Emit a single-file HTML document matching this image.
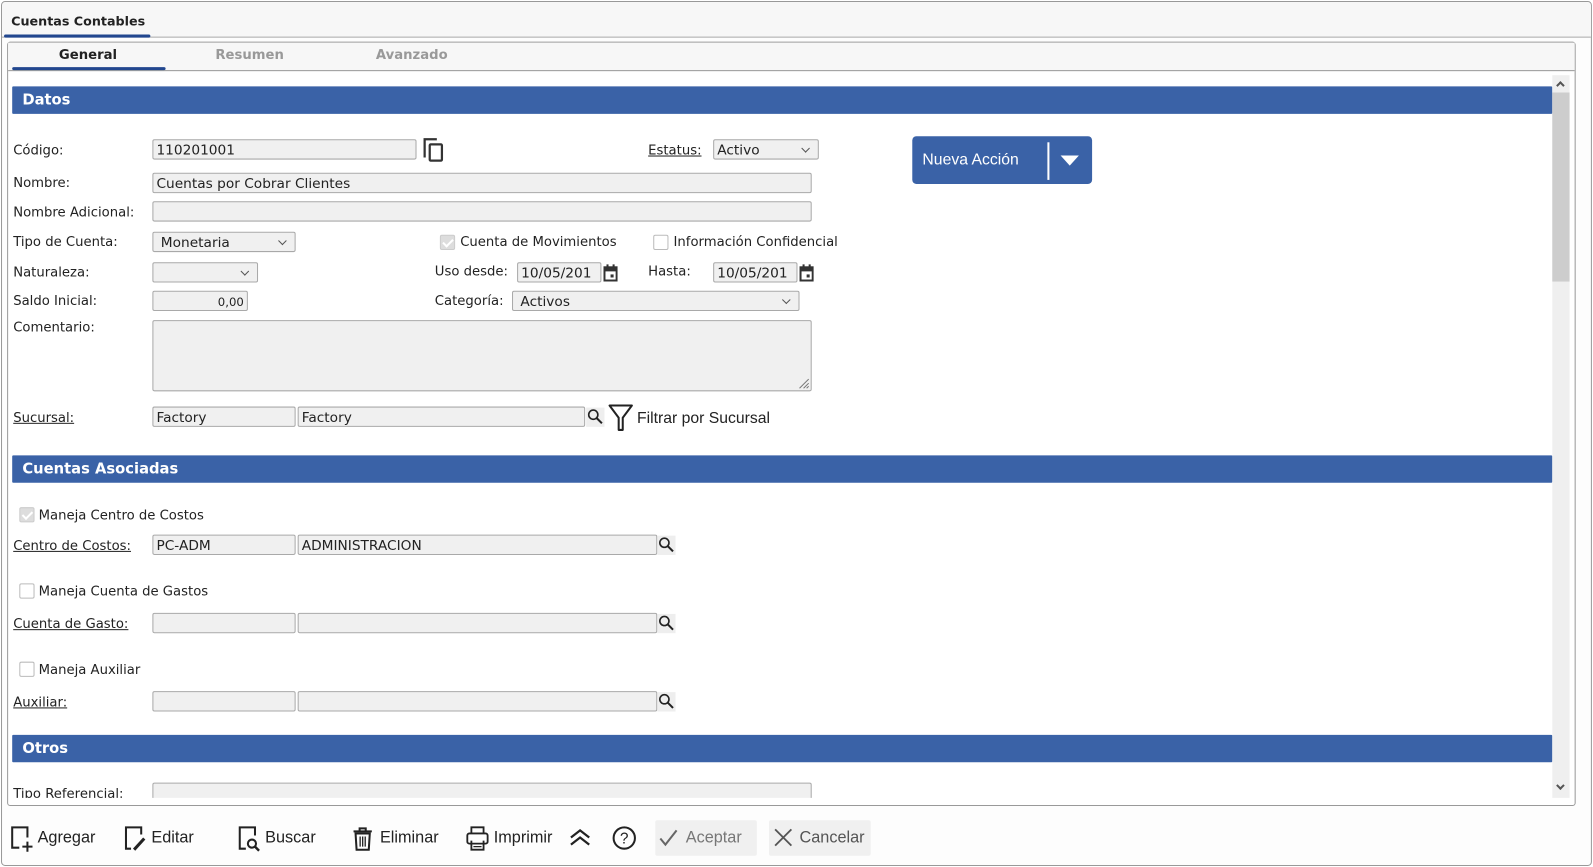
<!DOCTYPE html>
<html><head><meta charset="utf-8"><style>
*{box-sizing:border-box;margin:0;padding:0}
html,body{width:1593px;height:867px;overflow:hidden;background:#fff}
#w{position:absolute;left:0;top:0;width:1568px;height:853px;transform:scale(1.0159,1.0164);transform-origin:0 0;font-family:"DejaVu Sans",Verdana,sans-serif;font-size:13px;color:#222}
.a{position:absolute}
.lb{position:absolute;white-space:nowrap;line-height:18px}
.u{text-decoration:underline}
.in{position:absolute;background:#f0f0f0;border:1px solid #a9a9a9;border-radius:2px;height:20px;padding:1px 3px 0;line-height:18px;font-size:13.5px;white-space:nowrap;overflow:hidden}
.sel::after{content:"";position:absolute;right:9px;top:5px;width:5px;height:5px;border-right:1px solid #555;border-bottom:1px solid #555;transform:rotate(45deg)}
.bar{position:absolute;left:12px;width:1516px;height:27px;background:#3a62a7;color:#fff;font-weight:bold;font-size:14.5px;line-height:29px;padding-left:10px;border-radius:1px}
.cb{position:absolute;width:15px;height:15px;border:1px solid #bbb;border-radius:2px;background:#fff}
.cb.on{background:#ddd;border-color:#ccc}
.cb.on::after{content:"";position:absolute;left:4px;top:1px;width:4px;height:8px;border-right:2px solid #fff;border-bottom:2px solid #fff;transform:rotate(45deg)}
.tb{position:absolute;top:816px;font-family:"Liberation Sans",sans-serif;font-size:16px;line-height:18px;color:#222;white-space:nowrap}
</style></head><body><div id="w">
<div class="a" style="left:1px;top:1px;width:1566px;height:851px;border:1px solid #999;border-radius:4px;background:#fdfdfd"></div>
<div class="a" style="left:2px;top:2px;width:1564px;height:35px;background:#f7f7f7;border-bottom:1px solid #999;border-radius:4px 4px 0 0"></div>
<div class="lb" style="left:11px;top:12px;font-weight:bold;font-size:12.5px;color:#222">Cuentas Contables</div>
<div class="a" style="left:4px;top:34px;width:144px;height:3px;background:#22478f;border-radius:2px"></div>
<div class="a" style="left:7px;top:41px;width:1544px;height:752px;border:1px solid #999;border-radius:3px;background:#fff"></div>
<div class="a" style="left:8px;top:42px;width:1542px;height:28px;background:#f7f7f7;border-bottom:1px solid #999"></div>
<div class="lb" style="left:58px;top:46px;font-weight:bold;font-size:13px">General</div>
<div class="lb" style="left:212px;top:46px;font-weight:bold;font-size:13px;color:#999">Resumen</div>
<div class="lb" style="left:370px;top:46px;font-weight:bold;font-size:13px;color:#999">Avanzado</div>
<div class="a" style="left:12px;top:66px;width:151px;height:3px;background:#22478f;border-radius:2px"></div>
<div class="a" style="left:1528px;top:74px;width:17px;height:711px;background:#efefef"></div>
<div class="a" style="left:1528px;top:91px;width:17px;height:186px;background:#cdcdcd"></div>
<div class="a" style="left:1533px;top:81px;width:6px;height:6px;border-left:2px solid #555;border-top:2px solid #555;transform:rotate(45deg)"></div>
<div class="a" style="left:1533px;top:770px;width:6px;height:6px;border-right:2px solid #555;border-bottom:2px solid #555;transform:rotate(45deg)"></div>
<div class="a" style="left:8px;top:70px;width:1520px;height:715px;overflow:hidden">
<div style="position:absolute;left:-8px;top:-70px;width:1568px;height:853px">
<div class="bar" style="top:85px">Datos</div>
<div class="lb" style="left:13px;top:140px">Código:</div>
<div class="in" style="left:150px;top:137px;width:260px">110201001</div>
<svg class="a" style="left:415px;top:134px" width="24" height="26" viewBox="0 0 24 26"><path d="M3 21V3h12" fill="none" stroke="#333" stroke-width="2.2"/><rect x="8" y="8" width="12" height="16" fill="none" stroke="#333" stroke-width="2.2" rx="1"/></svg>
<div class="lb u" style="left:638px;top:140px">Estatus:</div>
<div class="in sel" style="left:702px;top:137px;width:104px">Activo</div>
<div class="a" style="left:898px;top:134px;width:177px;height:47px;background:#3a62a7;border-radius:4px"></div>
<div class="lb" style="left:908px;top:149px;color:#fff;font-family:'Liberation Sans',sans-serif;font-size:15.5px">Nueva Acción</div>
<div class="a" style="left:1031px;top:140px;width:2px;height:37px;background:#fff"></div>
<div class="a" style="left:1044px;top:153px;width:0;height:0;border-left:9px solid transparent;border-right:9px solid transparent;border-top:10px solid #fff"></div>
<div class="lb" style="left:13px;top:172px">Nombre:</div>
<div class="in" style="left:150px;top:170px;width:649px">Cuentas por Cobrar Clientes</div>
<div class="lb" style="left:13px;top:201px">Nombre Adicional:</div>
<div class="in" style="left:150px;top:198px;width:649px"></div>
<div class="lb" style="left:13px;top:230px">Tipo de Cuenta:</div>
<div class="in sel" style="left:150px;top:228px;width:141px">&nbsp;Monetaria</div>
<div class="cb on" style="left:433px;top:231px"></div>
<div class="lb" style="left:453px;top:230px">Cuenta de Movimientos</div>
<div class="cb" style="left:643px;top:231px"></div>
<div class="lb" style="left:663px;top:230px">Información Confidencial</div>
<div class="lb" style="left:13px;top:260px">Naturaleza:</div>
<div class="in sel" style="left:150px;top:258px;width:104px"></div>
<div class="lb" style="left:428px;top:259px">Uso desde:</div>
<div class="in" style="left:509px;top:258px;width:83px">10/05/201</div>
<svg class="a" style="left:594px;top:260px" width="14" height="17" viewBox="0 0 14 17"><rect x="1" y="3" width="12" height="13" fill="none" stroke="#333" stroke-width="2"/><rect x="1" y="3" width="12" height="4" fill="#333"/><rect x="3" y="0" width="2" height="4" fill="#333"/><rect x="9" y="0" width="2" height="4" fill="#333"/><rect x="7" y="10" width="3" height="3" fill="#333"/></svg>
<div class="lb" style="left:638px;top:259px">Hasta:</div>
<div class="in" style="left:702px;top:258px;width:83px">10/05/201</div>
<svg class="a" style="left:787px;top:260px" width="14" height="17" viewBox="0 0 14 17"><rect x="1" y="3" width="12" height="13" fill="none" stroke="#333" stroke-width="2"/><rect x="1" y="3" width="12" height="4" fill="#333"/><rect x="3" y="0" width="2" height="4" fill="#333"/><rect x="9" y="0" width="2" height="4" fill="#333"/><rect x="7" y="10" width="3" height="3" fill="#333"/></svg>
<div class="lb" style="left:13px;top:288px">Saldo Inicial:</div>
<div class="in" style="left:150px;top:286px;width:94px;text-align:right;font-size:11.5px">0,00</div>
<div class="lb" style="left:428px;top:288px">Categoría:</div>
<div class="in sel" style="left:504px;top:286px;width:283px">&nbsp;Activos</div>
<div class="lb" style="left:13px;top:314px">Comentario:</div>
<div class="in" style="left:150px;top:315px;width:649px;height:70px"></div>
<svg class="a" style="left:785px;top:371px" width="12" height="12"><path d="M2 11L11 2M6 11L11 6M9 11L11 9" stroke="#777"/></svg>
<div class="lb u" style="left:13px;top:403px">Sucursal:</div>
<div class="in" style="left:150px;top:400px;width:141px">Factory</div>
<div class="in" style="left:293px;top:400px;width:283px">Factory</div>
<div class="a" style="left:577px;top:401px;width:18px;height:19px;background:#eee"></div>
<svg class="a" style="left:578px;top:402px" width="16" height="16"><circle cx="6" cy="6" r="4.5" fill="none" stroke="#222" stroke-width="1.6"/><path d="M9.5 9.5L14.5 14.5" stroke="#222" stroke-width="2"/></svg>
<svg class="a" style="left:598px;top:397px" width="26" height="28" viewBox="0 0 26 28"><path d="M2 2H24L15 14V26H11V14Z" fill="none" stroke="#222" stroke-width="2" stroke-linejoin="round"/></svg>
<div class="lb" style="left:627px;top:403px;font-family:'Liberation Sans',sans-serif;font-size:15.5px">Filtrar por Sucursal</div>
<div class="bar" style="top:448px">Cuentas Asociadas</div>
<div class="cb on" style="left:19px;top:499px"></div>
<div class="lb" style="left:38px;top:499px">Maneja Centro de Costos</div>
<div class="lb u" style="left:13px;top:529px">Centro de Costos:</div>
<div class="in" style="left:150px;top:526px;width:141px">PC-ADM</div>
<div class="in" style="left:293px;top:526px;width:354px">ADMINISTRACION</div>
<div class="a" style="left:647px;top:527px;width:18px;height:19px;background:#eee"></div>
<svg class="a" style="left:648px;top:528px" width="16" height="16"><circle cx="6" cy="6" r="4.5" fill="none" stroke="#222" stroke-width="1.6"/><path d="M9.5 9.5L14.5 14.5" stroke="#222" stroke-width="2"/></svg>
<div class="cb" style="left:19px;top:574px"></div>
<div class="lb" style="left:38px;top:574px">Maneja Cuenta de Gastos</div>
<div class="lb u" style="left:13px;top:606px">Cuenta de Gasto:</div>
<div class="in" style="left:150px;top:603px;width:141px"></div>
<div class="in" style="left:293px;top:603px;width:354px"></div>
<div class="a" style="left:647px;top:604px;width:18px;height:19px;background:#eee"></div>
<svg class="a" style="left:648px;top:605px" width="16" height="16"><circle cx="6" cy="6" r="4.5" fill="none" stroke="#222" stroke-width="1.6"/><path d="M9.5 9.5L14.5 14.5" stroke="#222" stroke-width="2"/></svg>
<div class="cb" style="left:19px;top:651px"></div>
<div class="lb" style="left:38px;top:651px">Maneja Auxiliar</div>
<div class="lb u" style="left:13px;top:683px">Auxiliar:</div>
<div class="in" style="left:150px;top:680px;width:141px"></div>
<div class="in" style="left:293px;top:680px;width:354px"></div>
<div class="a" style="left:647px;top:681px;width:18px;height:19px;background:#eee"></div>
<svg class="a" style="left:648px;top:682px" width="16" height="16"><circle cx="6" cy="6" r="4.5" fill="none" stroke="#222" stroke-width="1.6"/><path d="M9.5 9.5L14.5 14.5" stroke="#222" stroke-width="2"/></svg>
<div class="bar" style="top:723px">Otros</div>
<div class="lb" style="left:13px;top:773px">Tipo Referencial:</div>
<div class="in" style="left:150px;top:770px;width:649px"></div>
</div></div>
<svg class="a" style="left:9px;top:811px" width="26" height="28" viewBox="0 0 26 28"><path d="M10 23H3V3H18V13" fill="none" stroke="#222" stroke-width="2"/><path d="M18 17V27M13 22H23" stroke="#222" stroke-width="2"/></svg>
<div class="tb" style="left:37px">Agregar</div>
<svg class="a" style="left:121px;top:811px" width="26" height="28" viewBox="0 0 26 28"><path d="M8 24H3V3H18V10" fill="none" stroke="#222" stroke-width="2"/><path d="M11 25L21 14" stroke="#222" stroke-width="3"/></svg>
<div class="tb" style="left:149px">Editar</div>
<svg class="a" style="left:233px;top:811px" width="26" height="28" viewBox="0 0 26 28"><path d="M9 24H3V3H18V11" fill="none" stroke="#222" stroke-width="2"/><circle cx="15" cy="19" r="4" fill="none" stroke="#222" stroke-width="2"/><path d="M18 22L22 26" stroke="#222" stroke-width="2.4"/></svg>
<div class="tb" style="left:261px">Buscar</div>
<svg class="a" style="left:346px;top:812px" width="22" height="26" viewBox="0 0 22 26"><path d="M2 6H20M8 6V3H14V6" fill="none" stroke="#222" stroke-width="2"/><path d="M4 8H18L17 24H5Z" fill="none" stroke="#222" stroke-width="2"/><path d="M8.5 11V21M11 11V21M13.5 11V21" stroke="#222" stroke-width="1.3"/></svg>
<div class="tb" style="left:374px">Eliminar</div>
<svg class="a" style="left:458px;top:812px" width="24" height="26" viewBox="0 0 24 26"><path d="M6 8V2H18V8" fill="none" stroke="#222" stroke-width="1.8"/><rect x="2" y="8" width="20" height="10" rx="2" fill="none" stroke="#222" stroke-width="1.8"/><path d="M6 15V24H18V15" fill="none" stroke="#222" stroke-width="1.8"/><path d="M8 18H16M8 21H16" stroke="#222" stroke-width="1.2"/></svg>
<div class="tb" style="left:486px">Imprimir</div>
<svg class="a" style="left:560px;top:814px" width="22" height="20" viewBox="0 0 22 20"><path d="M2 10L11 3L20 10M2 17L11 10L20 17" fill="none" stroke="#222" stroke-width="2.2"/></svg>
<svg class="a" style="left:602px;top:812px" width="25" height="25" viewBox="0 0 25 25"><circle cx="12.5" cy="12.5" r="10.5" fill="none" stroke="#222" stroke-width="2"/><text x="12.5" y="18" text-anchor="middle" font-family="Liberation Sans" font-size="15" fill="#222">?</text></svg>
<div class="a" style="left:645px;top:807px;width:100px;height:35px;background:#f0f0f0;border-radius:2px"></div>
<svg class="a" style="left:648px;top:815px" width="20" height="18"><path d="M2 10L7 16L18 2" fill="none" stroke="#666" stroke-width="2"/></svg>
<div class="tb" style="left:675px;color:#777">Aceptar</div>
<div class="a" style="left:757px;top:807px;width:100px;height:35px;background:#f0f0f0;border-radius:2px"></div>
<svg class="a" style="left:761px;top:814px" width="20" height="20"><path d="M2 2L18 18M18 2L2 18" stroke="#555" stroke-width="1.8"/></svg>
<div class="tb" style="left:787px;color:#555">Cancelar</div>
</div></body></html>
